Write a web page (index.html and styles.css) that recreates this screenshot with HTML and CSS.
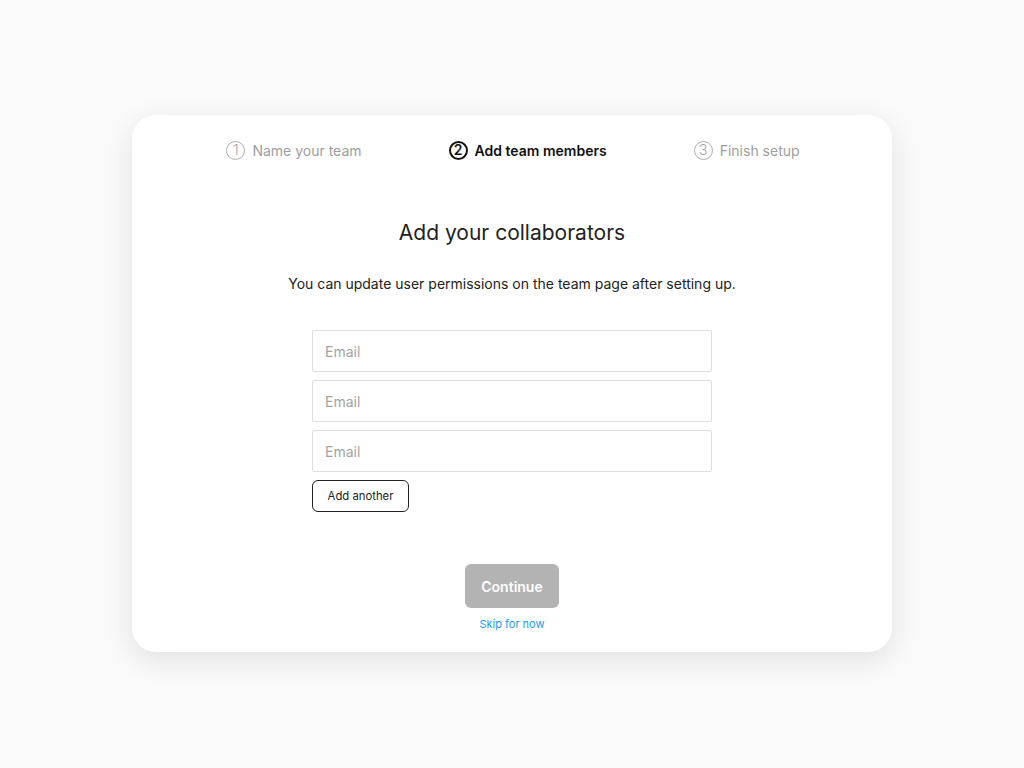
FILE: index.html
```html
<!DOCTYPE html>
<html>
<head>
<meta charset="utf-8">
<link rel="stylesheet" href="styles.css">
</head>
<body>
<div class="page">
  <div class="card">
    <div class="steps">
      <div class="step"><span class="num">1</span><span class="label">Name your team</span></div>
      <div class="step active"><span class="num">2</span><span class="label">Add team members</span></div>
      <div class="step"><span class="num">3</span><span class="label">Finish setup</span></div>
    </div>
    <h1 class="title">Add your collaborators</h1>
    <p class="subtitle">You can update user permissions on the team page after setting up.</p>
    <div class="form">
      <input class="email" type="text" placeholder="Email">
      <input class="email" type="text" placeholder="Email">
      <input class="email" type="text" placeholder="Email">
      <button class="add">Add another</button>
    </div>
    <div class="actions">
      <button class="continue">Continue</button>
      <a class="skip" href="#">Skip for now</a>
    </div>
  </div>
</div>
</body>
</html>
```

FILE: styles.css
```css
* { box-sizing: border-box; }
html, body { margin: 0; padding: 0; }
body {
  background: #fafafa;
  font-family: Inter, "Noto Sans", sans-serif;
  color: #222;
  min-height: 100vh;
}
.page {
  display: flex;
  justify-content: center;
  padding-top: 115px;
  min-height: 100vh;
}
.card {
  width: 760px;
  height: 537px;
  background: #fff;
  border-radius: 24px;
  box-shadow: 0 8px 28px rgba(0,0,0,0.10);
  display: flex;
  flex-direction: column;
  align-items: center;
  padding-top: 25px;
}
.steps {
  display: flex;
  gap: 87px;
  align-items: center;
  margin-left: 2px;
  height: 20px;
}
.step {
  display: flex;
  align-items: center;
  gap: 7px;
  color: #9e9e9e;
  font-size: 14px;
}
.num {
  width: 19px;
  height: 19px;
  border: 1.5px solid #b0b0b0;
  border-radius: 50%;
  display: flex;
  align-items: center;
  justify-content: center;
  font-size: 14.5px;
  font-weight: 300;
  line-height: 1;
  color: #a8a8a8;
}
.step.active { color: #111; font-weight: 600; }
.step.active .num { border: 2px solid #111; font-weight: 600; color: #111; font-size: 14px; }
.title {
  font-size: 21px;
  font-weight: 400;
  color: #222;
  margin: 59px 0 0;
  line-height: 28px;
}
.subtitle {
  font-size: 14px;
  color: #222;
  margin: 27px 0 0;
  line-height: 20px;
}
.form {
  width: 400px;
  margin-top: 36px;
  display: flex;
  flex-direction: column;
  gap: 8px;
}
.email {
  height: 42px;
  border: 1px solid #dedede;
  border-radius: 2px;
  padding: 0 12px;
  font-family: inherit;
  font-size: 14px;
  color: #222;
  outline: none;
}
.email::placeholder { color: #a4a4a4; }
.add {
  align-self: flex-start;
  width: 97px;
  height: 32px;
  border: 1px solid #222;
  border-radius: 6px;
  background: #fff;
  font-family: inherit;
  font-size: 11.3px;
  color: #222;
  padding: 0;
}
.actions {
  margin-top: 52px;
  display: flex;
  flex-direction: column;
  align-items: center;
  gap: 9px;
}
.continue {
  width: 94px;
  height: 44px;
  border: none;
  border-radius: 6px;
  background: #b3b3b3;
  color: #fff;
  font-family: inherit;
  font-size: 14px;
  font-weight: 600;
  padding: 0;
}
.skip {
  color: #1a9bf0;
  font-size: 11px;
  text-decoration: none;
}
```
